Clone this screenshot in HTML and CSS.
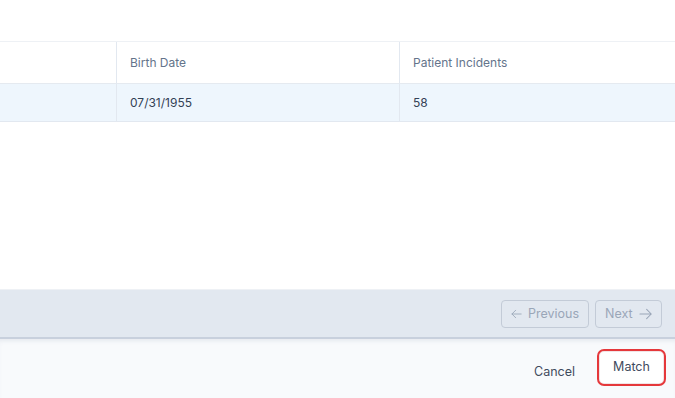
FILE: index.html
```html
<!DOCTYPE html>
<html>
<head>
<meta charset="utf-8">
<link rel="stylesheet" href="styles.css">
</head>
<body>
<div class="modal">
  <div class="top"></div>
  <div class="grid">
    <div class="cell head first"></div>
    <div class="cell head">Birth Date</div>
    <div class="cell head">Patient Incidents</div>
    <div class="cell row first"></div>
    <div class="cell row">07/31/1955</div>
    <div class="cell row">58</div>
  </div>
  <div class="spacer"></div>
  <div class="pager">
    <button class="pbtn prev"><svg width="14" height="12" viewBox="0 0 14 12"><path d="M13 6H1.2M6 1.2L1.2 6L6 10.8" fill="none" stroke="currentColor" stroke-width="1.1" stroke-linecap="round" stroke-linejoin="round"/></svg><span>Previous</span></button>
    <button class="pbtn next"><span>Next</span><svg width="14" height="12" viewBox="0 0 14 12"><path d="M1 6H12.8M8 1.2L12.8 6L8 10.8" fill="none" stroke="currentColor" stroke-width="1.1" stroke-linecap="round" stroke-linejoin="round"/></svg></button>
  </div>
  <div class="footer">
    <button class="cancel">Cancel</button>
    <button class="match">Match</button>
  </div>
</div>
</body>
</html>
```

FILE: styles.css
```css
* { box-sizing: border-box; }
html, body { margin: 0; padding: 0; }
body {
  width: 675px;
  height: 398px;
  overflow: hidden;
  background: #ffffff;
  font-family: Inter, "Noto Sans", sans-serif;
}
.modal {
  display: flex;
  flex-direction: column;
  height: 398px;
}
.top {
  height: 42px;
  border-bottom: 1px solid #eef1f5;
}
.grid {
  display: grid;
  grid-template-columns: 116px 283px 1fr;
}
.cell {
  display: flex;
  align-items: center;
  padding-left: 13px;
  font-size: 12px;
  border-left: 1px solid #e2e8f0;
}
.cell.first { border-left: none; }
.head {
  height: 42px;
  color: #64748b;
  border-bottom: 1px solid #e5eaf0;
}
.row {
  height: 38px;
  color: #334155;
  background: #eef6fd;
  border-bottom: 1px solid #e2e8f0;
}
.spacer { flex: 1; }
.pager {
  height: 50px;
  background: #e2e8f0;
  border-top: 1px solid #eef1f5;
  border-bottom: 2px solid #c8d0dd;
  display: flex;
  justify-content: flex-end;
  align-items: center;
  gap: 6px;
  padding-right: 13px;
}
.pbtn {
  height: 28px;
  display: flex;
  align-items: center;
  gap: 6px;
  background: transparent;
  border: 1px solid #c3cbd7;
  border-radius: 4px;
  color: #9aa6b8;
  font-family: inherit;
  font-size: 12.5px;
  padding: 0 9px;
}
.pbtn.prev { width: 88px; }
.pbtn.next { width: 67px; }
.footer {
  height: 59px;
  background: #f8fafc;
  box-shadow: inset 0 4px 4px -2px rgba(148,163,184,0.18);
  display: flex;
  justify-content: flex-end;
  align-items: flex-start;
  padding: 10px 9px 0 0;
  gap: 22px;
}
.cancel {
  margin-top: 15px;
  background: none;
  border: none;
  padding: 0;
  font-family: inherit;
  font-size: 12.5px;
  color: #3f4b5e;
}
.match {
  width: 69px;
  height: 37px;
  background: #ffffff;
  border: 2px solid #e5383b;
  border-radius: 7px;
  box-shadow: inset 0 0 0 1px #f1e4e6;
  font-family: inherit;
  font-size: 12.5px;
  color: #3f4b5e;
  padding: 0 0 3px 0;
}
```
